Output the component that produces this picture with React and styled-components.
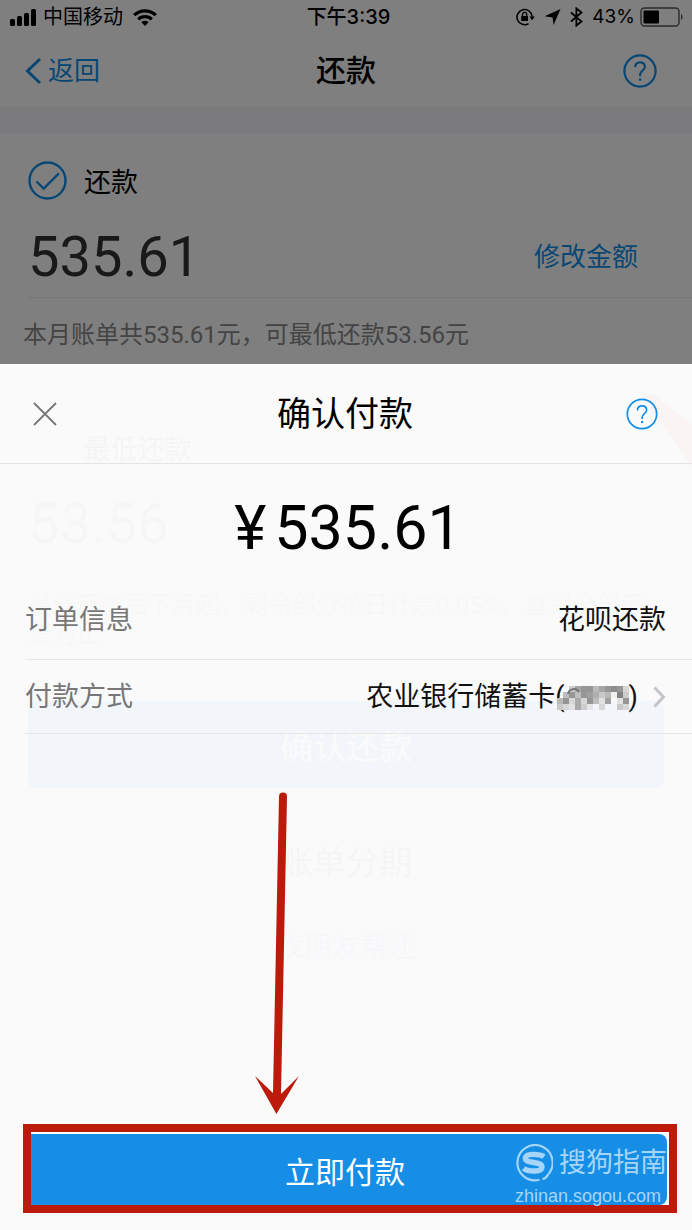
import React, { useState } from 'react';
import styled, { createGlobalStyle } from 'styled-components';

const GlobalStyle = createGlobalStyle`
  *, *::before, *::after {
    box-sizing: border-box;
  }

  body {
    margin: 0;
    background: #fff;
    color: #000;
    font-family: Roboto, "Noto Sans CJK SC", sans-serif;
  }

  button {
    padding: 0;
    border: none;
    background: none;
    color: inherit;
    font: inherit;
    cursor: pointer;
  }
`;

const BLUE = '#108ee9';
const RED = '#bc1a0b';

/* The page and the payment overlay share one grid cell */
const Screen = styled.div`
  display: grid;
  min-height: 100vh;
  overflow: hidden;

  > * {
    grid-area: 1 / 1;
    min-width: 0;
  }
`;

const Page = styled.main`
  display: flex;
  flex-direction: column;
  background: #fff;
`;

const StatusBar = styled.div`
  display: grid;
  grid-template-columns: 1fr auto 1fr;
  align-items: center;
  height: 34px;
  padding: 0 8px 0 10px;
  font-family: Inter, "Noto Sans CJK SC", sans-serif;
  font-size: 20px;
  line-height: 34px;
`;

const StatusGroup = styled.div`
  display: flex;
  align-items: center;
  justify-content: ${(props) => (props.$end ? 'flex-end' : 'flex-start')};
  gap: ${(props) => props.$gap || 6}px;
`;

const Time = styled.time`
  padding-left: 3px;
  font-weight: 500;
`;

const Percent = styled.span`
  font-size: 19px;
`;

const NavBar = styled.header`
  display: grid;
  grid-template-columns: 1fr auto 1fr;
  align-items: center;
  height: 73px;
  padding: 0 24px;
`;

const BackLink = styled.a`
  display: flex;
  align-items: center;
  gap: 6px;
  color: ${BLUE};
  font-size: 26px;
  line-height: 36px;
  text-decoration: none;
`;

const NavTitle = styled.h1`
  margin: 0;
  font-size: 30px;
  font-weight: 500;
  line-height: 40px;
`;

const HelpButton = styled.button`
  display: flex;
  justify-self: end;
  color: ${BLUE};

  ${NavBar} & {
    margin-right: 11px;
  }
`;

const Band = styled.div`
  height: 27px;
  background: #f5f5f9;
`;

const Option = styled.section`
  position: relative;
  padding: 0 28px;
`;

const OptionLabel = styled.h2`
  display: flex;
  align-items: center;
  gap: 17px;
  height: 93px;
  margin: 0;
  font-size: 27px;
  font-weight: 400;
`;

const Unchecked = styled.span`
  width: 39px;
`;

const OptionAmount = styled.div`
  display: flex;
  align-items: center;
  justify-content: space-between;
  height: 60px;
  padding-right: 26px;
  color: #333;
  font-size: 56px;
  line-height: 60px;
`;

const EditButton = styled.button`
  && {
    color: ${BLUE};
    font-size: 26px;
    line-height: 36px;
  }
`;

const OptionNote = styled.p`
  margin: 10px -28px 0 0;
  padding-top: 20px;
  border-top: 1px solid #eee;
  color: #888;
  font-size: 24px;
  line-height: 34px;
`;

const NoteText = styled.span`
  display: block;
  margin-left: -5px;
`;

const LowestOption = styled(Option)`
  padding-top: 49px;

  ${OptionLabel} {
    color: #555;
  }

  ${OptionAmount} {
    color: #888;
  }

  ${OptionNote} {
    margin: 36px 0 0;
    padding: 0;
    border: none;
    color: #999;
    line-height: 30px;
  }
`;

const Ribbon = styled.svg`
  position: absolute;
  top: 34px;
  right: 0;
`;

const PageActions = styled.div`
  display: flex;
  flex-direction: column;
  align-items: center;
  padding: 51px 28px 0;
`;

const RepayButton = styled.button`
  && {
    width: 100%;
    height: 87px;
    border-radius: 8px;
    background: ${BLUE};
    color: #fff;
    font-size: 33px;
  }
`;

const PageLink = styled.a`
  margin-top: ${(props) => props.$top}px;
  color: ${(props) => props.$color};
  font-size: ${(props) => props.$size}px;
  line-height: 44px;
  text-decoration: none;
`;

const Overlay = styled.div`
  z-index: 1;
  display: grid;
  grid-template-rows: 364px 1fr;
`;

const Scrim = styled.div`
  background: rgba(0, 0, 0, 0.5);
`;

const Sheet = styled.section`
  display: flex;
  flex-direction: column;
  background: rgba(250, 250, 250, 0.97);
`;

const SheetHeader = styled.header`
  display: grid;
  grid-template-columns: 1fr auto 1fr;
  align-items: center;
  height: 100px;
  padding: 0 34px 0 32px;
  border-bottom: 1px solid #e4e4e6;
`;

const CloseButton = styled.button`
  display: flex;
  justify-self: start;
  color: #777;
`;

const SheetTitle = styled.h2`
  margin: 0;
  font-size: 34px;
  font-weight: 400;
  line-height: 48px;
`;

const Total = styled.p`
  display: flex;
  justify-content: center;
  gap: 8px;
  margin: 0;
  padding: 28px 0 16px 4px;
  font-size: 61px;
  line-height: 72px;
`;

const Details = styled.dl`
  margin: 0 0 0 25px;
`;

const DetailRow = styled.div`
  display: flex;
  align-items: center;
  justify-content: space-between;
  height: ${(props) => props.$height}px;
  padding-right: 26px;
  border-bottom: 1px solid #e4e6e8;
  font-size: 27px;
  line-height: 38px;
`;

const Term = styled.dt`
  color: #777;
`;

const Value = styled.dd`
  margin: 0;
  color: #111;
`;

const CardButton = styled.button`
  display: flex;
  align-items: center;
`;

const Digits = styled.svg`
  margin: 3px 0 0 -8px;
`;

const Chevron = styled.svg`
  margin-left: 15px;
`;

const SheetFooter = styled.footer`
  position: relative;
  margin-top: auto;
  padding: 60px 15px 17px 23px;
`;

const Highlight = styled.div`
  padding: 2px 2px 0 0;
  border: 8px solid ${RED};
  background: #fff;
`;

const PayButton = styled.button`
  && {
    position: relative;
    display: block;
    width: 100%;
    height: 71px;
    padding-right: 8px;
    border-radius: 0 8px 8px 0;
    background: #168ee6;
    color: #fff;
    font-size: 30px;
  }
`;

const Watermark = styled.span`
  position: absolute;
  top: 8px;
  right: 0;
  display: flex;
  flex-direction: column;
  color: #a5d5f8;
`;

const WatermarkBrand = styled.span`
  display: flex;
  align-items: center;
  gap: 6px;
  font-size: 27px;
  line-height: 42px;
`;

const WatermarkUrl = styled.span`
  font-family: "Liberation Sans", sans-serif;
  font-size: 18px;
  line-height: 24px;
  text-align: left;
`;

const Arrow = styled.svg`
  position: absolute;
  bottom: 116px;
  left: 254px;
`;

const SignalIcon = () => (
  <svg width="27" height="17" viewBox="0 0 27 17" aria-hidden="true">
    <rect x="0" y="10" width="5" height="7" rx="1.5" />
    <rect x="7" y="7" width="5" height="10" rx="1.5" />
    <rect x="14" y="4" width="5" height="13" rx="1.5" />
    <rect x="21" y="0" width="5" height="17" rx="1.5" />
  </svg>
);

const WifiIcon = () => (
  <svg width="29" height="17" viewBox="-4 0 29 17" fill="none" stroke="#000" strokeWidth="3.2" aria-hidden="true">
    <path d="M1.2 6.2a15.4 15.4 0 0 1 21.6 0" />
    <path d="M5.2 10.4a9.7 9.7 0 0 1 13.6 0" />
    <path d="M12 17l-3.6-3.8a5.2 5.2 0 0 1 7.2 0z" fill="#000" stroke="none" />
  </svg>
);

const LockIcon = () => (
  <svg width="19" height="18" viewBox="0 0 19 18" fill="none" stroke="#000" strokeWidth="1.6" aria-hidden="true">
    <path d="M12.6 15.6a7.6 7.6 0 1 1 3.6-6.8" />
    <path d="M13.4 8.6h5.4l-2.7 3.6z" fill="#000" stroke="none" />
    <rect x="5.2" y="8" width="6.8" height="5" rx="0.6" fill="#000" stroke="none" />
    <path d="M6.5 8V6.4a2.1 2.1 0 0 1 4.2 0V8" strokeWidth="1.3" />
  </svg>
);

const LocationIcon = () => (
  <svg width="17" height="16" viewBox="0 0 17 16" aria-hidden="true">
    <path d="M16.5 0L9.6 16 8.6 8.4 0.6 7.2z" />
  </svg>
);

const BluetoothIcon = () => (
  <svg width="13" height="20" viewBox="0 0 13 20" fill="none" stroke="#000" strokeWidth="1.8" aria-hidden="true">
    <path d="M1 5.5l10.5 9L6.4 18.6V1.4l5.1 4.1L1 14.5" />
  </svg>
);

const BatteryIcon = () => (
  <svg width="44" height="20" viewBox="0 0 44 20" aria-hidden="true">
    <rect x="1" y="1" width="38" height="18" rx="3.5" fill="none" stroke="#555" strokeWidth="1.4" />
    <rect x="3.5" y="3.5" width="15.5" height="13" rx="1" />
    <path d="M41 7c2 1 2 5 0 6z" fill="#555" />
  </svg>
);

const BackIcon = () => (
  <svg width="18" height="28" viewBox="0 0 18 28" fill="none" stroke="currentColor" strokeWidth="3" aria-hidden="true">
    <path d="M16 2L3.5 14 16 26" />
  </svg>
);

const HelpIcon = ({ size, stroke }) => (
  <svg width={size} height={size} viewBox="0 0 34 34" fill="none" stroke="currentColor" strokeWidth={stroke} aria-hidden="true">
    <circle cx="17" cy="17" r="15.6" />
    <path d="M12.2 13.2c0-3 2-4.9 4.9-4.9s4.8 1.8 4.8 4.5c0 3.8-4.8 4-4.8 8v1.4" />
    <circle cx="17.1" cy="25.6" r="1.3" fill="currentColor" stroke="none" />
  </svg>
);

const CheckIcon = () => (
  <svg width="39" height="39" viewBox="0 0 39 39" fill="none" stroke={BLUE} strokeWidth="2.4" aria-hidden="true">
    <circle cx="19.5" cy="19.5" r="18" />
    <path d="M8.5 20.5l7.2 7 15.2-15.2" />
  </svg>
);

const CloseIcon = () => (
  <svg width="26" height="26" viewBox="0 0 26 26" fill="none" stroke="currentColor" strokeWidth="1.8" aria-hidden="true">
    <path d="M2 2l22 22M24 2L2 24" />
  </svg>
);

const SogouIcon = () => (
  <svg width="38" height="38" viewBox="0 0 38 38" fill="none" stroke="currentColor" aria-hidden="true">
    <path d="M33.5 30A17.6 17.6 0 1 0 24.5 35.7M27.6 35.2c2.8-1 5-2.8 5.4-5.2" strokeWidth="2.2" />
    <path
      d="M29 12.6C26.4 10.8 22.8 10.4 18.8 10.4c-5.2 0-8.4 1-8.4 3.9 0 5.8 16.6 2.6 16.6 8.6 0 3-3.4 4.1-8.3 4.1-4.2 0-7.6-.8-10.1-2.7"
      strokeWidth="5.4"
    />
  </svg>
);

// Grey levels of the censored card digits, 0 is left clear
const MOSAIC = [
  [0, 0, 205, 165, 150, 150, 185, 165, 150, 140, 150, 215],
  [0, 190, 150, 190, 150, 160, 175, 200, 185, 240, 130, 205],
  [185, 150, 215, 170, 215, 150, 190, 225, 160, 0, 225, 150],
  [200, 215, 225, 170, 205, 230, 0, 215, 0, 0, 200, 215],
];

const CensoredDigits = () => (
  <Digits width="72" height="24" viewBox="0 0 72 24" role="img" aria-label="****">
    {MOSAIC.map((row, y) =>
      row.map((level, x) =>
        level ? (
          <rect
            key={`${x}-${y}`}
            x={x * 6}
            y={y * 6}
            width="6"
            height="6"
            fill={`rgb(${level}, ${level}, ${level})`}
            shapeRendering="crispEdges"
          />
        ) : null
      )
    )}
    <path d="M11 8a6 6 0 0 1 11-2" fill="none" stroke="#777" strokeWidth="2" />
  </Digits>
);

const RepaymentPage = () => (
  <Page>
    <StatusBar>
      <StatusGroup>
        <SignalIcon />
        <span>中国移动</span>
        <WifiIcon />
      </StatusGroup>
      <Time>下午3:39</Time>
      <StatusGroup $end $gap={9}>
        <LockIcon />
        <LocationIcon />
        <BluetoothIcon />
        <StatusGroup $gap={5}>
          <Percent>43%</Percent>
          <BatteryIcon />
        </StatusGroup>
      </StatusGroup>
    </StatusBar>
    <NavBar>
      <BackLink href="#back">
        <BackIcon />
        返回
      </BackLink>
      <NavTitle>还款</NavTitle>
      <HelpButton aria-label="帮助">
        <HelpIcon size={34} stroke={2.2} />
      </HelpButton>
    </NavBar>
    <Band />
    <Option>
      <OptionLabel>
        <CheckIcon />
        还款
      </OptionLabel>
      <OptionAmount>
        535.61
        <EditButton>修改金额</EditButton>
      </OptionAmount>
      <OptionNote>
        <NoteText>本月账单共535.61元，可最低还款53.56元</NoteText>
      </OptionNote>
    </Option>
    <LowestOption>
      <Ribbon width="56" height="80" viewBox="0 0 56 80" aria-hidden="true">
        <path d="M4 8h14l38 30v42z" fill="#ff4a4a" />
      </Ribbon>
      <OptionLabel>
        <Unchecked />
        最低还款
      </OptionLabel>
      <OptionAmount>53.56</OptionAmount>
      <OptionNote>最低还款后下月起，剩余部分按日计息0.05%，直到全部还清为止</OptionNote>
    </LowestOption>
    <PageActions>
      <RepayButton>确认还款</RepayButton>
      <PageLink href="#installment" $top={53} $size={33} $color="#666">
        账单分期
      </PageLink>
      <PageLink href="#friend" $top={41} $size={28} $color="#6a9cf0">
        找朋友帮还
      </PageLink>
    </PageActions>
  </Page>
);

const PaymentSheet = ({ onClose }) => (
  <Sheet role="dialog" aria-label="确认付款">
    <SheetHeader>
      <CloseButton aria-label="关闭" onClick={onClose}>
        <CloseIcon />
      </CloseButton>
      <SheetTitle>确认付款</SheetTitle>
      <HelpButton aria-label="帮助">
        <HelpIcon size={32} stroke={1.8} />
      </HelpButton>
    </SheetHeader>
    <Total>
      <span>¥</span>
      <span>535.61</span>
    </Total>
    <Details>
      <DetailRow $height={80}>
        <Term>订单信息</Term>
        <Value>花呗还款</Value>
      </DetailRow>
      <DetailRow $height={74}>
        <Term>付款方式</Term>
        <Value>
          <CardButton>
            农业银行储蓄卡(
            <CensoredDigits />
            )
            <Chevron width="13" height="22" viewBox="0 0 13 22" fill="none" stroke="#c3c3c8" strokeWidth="3" aria-hidden="true">
              <path d="M1.5 1.5l9 9.5-9 9.5" />
            </Chevron>
          </CardButton>
        </Value>
      </DetailRow>
    </Details>
    <SheetFooter>
      <Arrow width="46" height="322" viewBox="0 0 46 322" fill={RED} aria-hidden="true">
        <path d="M25 4.5a4 4 0 0 1 8 0L27 302l18-18-22.6 38L1 284l18 17z" />
      </Arrow>
      <Highlight>
        <PayButton>
          立即付款
          <Watermark>
            <WatermarkBrand>
              <SogouIcon />
              搜狗指南
            </WatermarkBrand>
            <WatermarkUrl>zhinan.sogou.com</WatermarkUrl>
          </Watermark>
        </PayButton>
      </Highlight>
    </SheetFooter>
  </Sheet>
);

const App = () => {
  const [open, setOpen] = useState(true);

  return (
    <>
      <GlobalStyle />
      <Screen>
        <RepaymentPage />
        {open && (
          <Overlay>
            <Scrim />
            <PaymentSheet onClose={() => setOpen(false)} />
          </Overlay>
        )}
      </Screen>
    </>
  );
};

export default App;
